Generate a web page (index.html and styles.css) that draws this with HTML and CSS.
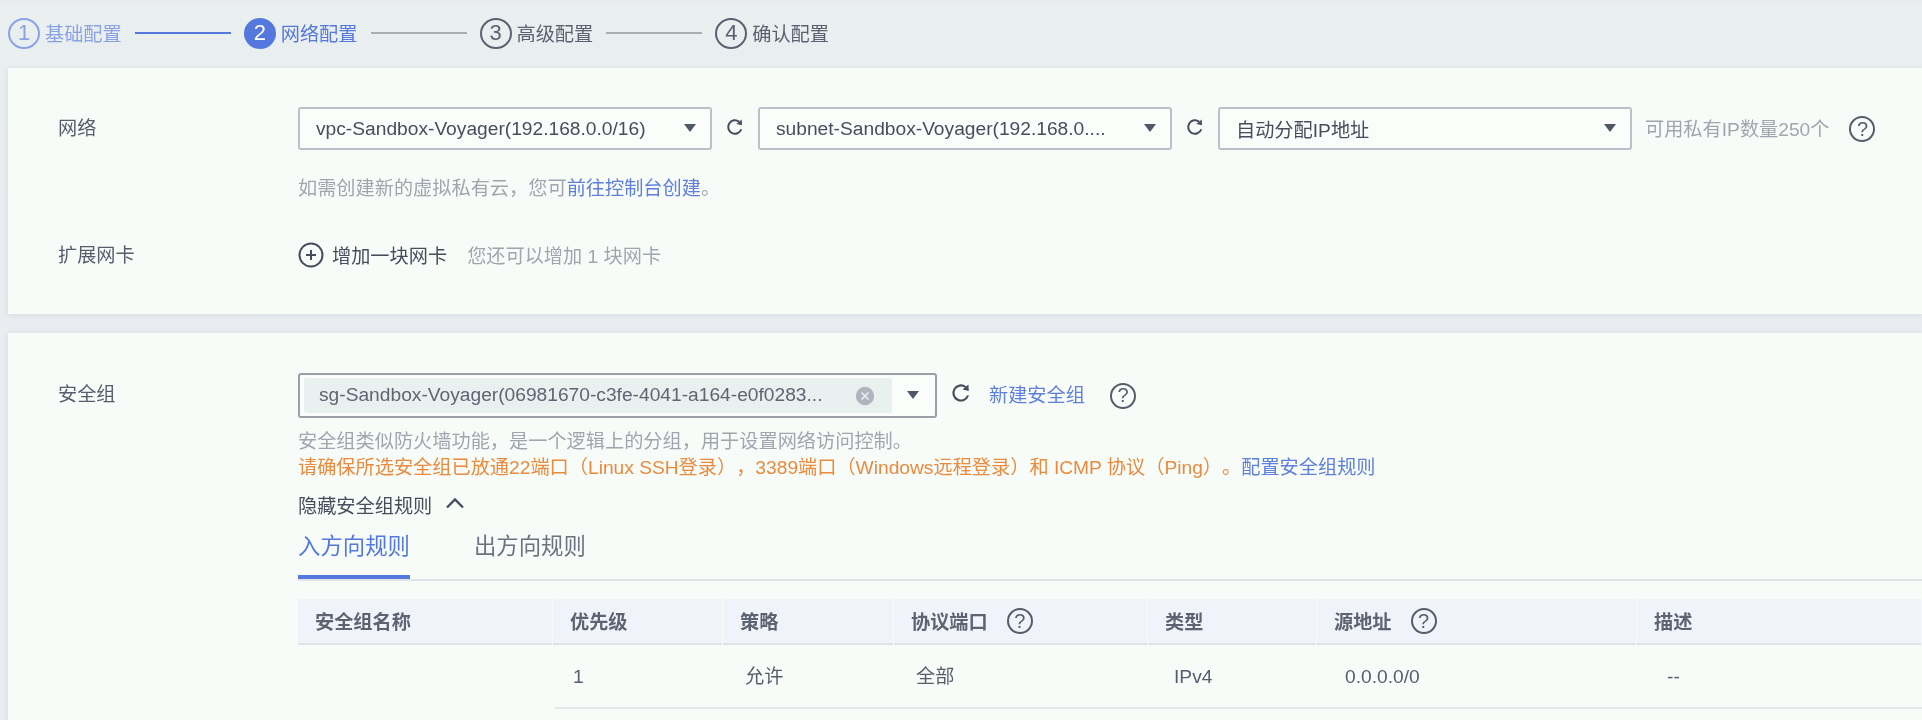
FILE: index.html
```html
<!DOCTYPE html>
<html lang="zh-CN">
<head>
    <meta charset="UTF-8">
    <title>网络配置</title>
    <link rel="stylesheet" href="styles.css">
</head>
<body>
    <div class="page">
        <!-- Wizard steps -->
        <div class="steps">
            <div class="step step-done"><span class="step-num">1</span><span class="step-text">基础配置</span></div>
            <div class="step-line step-line-done"></div>
            <div class="step step-active"><span class="step-num">2</span><span class="step-text">网络配置</span></div>
            <div class="step-line"></div>
            <div class="step"><span class="step-num">3</span><span class="step-text">高级配置</span></div>
            <div class="step-line"></div>
            <div class="step"><span class="step-num">4</span><span class="step-text">确认配置</span></div>
        </div>

        <div class="card card-network">
            <div class="form-row">
                <div class="form-label">网络</div>
                <div class="form-body">
                    <div class="controls">
                        <div class="select"><span class="select-text">vpc-Sandbox-Voyager(192.168.0.0/16)</span><span class="caret"></span></div>
                        <svg class="refresh" viewBox="0 0 20 20"><path d="M17 12.5A7.5 7.5 0 1 1 14.5 4"/><path class="fill" d="M17.4 1.6l.4 6.4-6.2-1.4z"/></svg>
                        <div class="select"><span class="select-text">subnet-Sandbox-Voyager(192.168.0....</span><span class="caret"></span></div>
                        <svg class="refresh" viewBox="0 0 20 20"><path d="M17 12.5A7.5 7.5 0 1 1 14.5 4"/><path class="fill" d="M17.4 1.6l.4 6.4-6.2-1.4z"/></svg>
                        <div class="select"><span class="select-text">自动分配IP地址</span><span class="caret"></span></div>
                        <span class="ip-count">可用私有IP数量250个</span>
                        <span class="help help-ip">?</span>
                    </div>
                    <div class="hint hint-vpc">如需创建新的虚拟私有云，您可<a class="link">前往控制台创建</a>。</div>
                </div>
            </div>
            <div class="form-row row-nic">
                <div class="form-label">扩展网卡</div>
                <div class="form-body nic">
                    <svg class="plus" viewBox="0 0 26 26"><circle cx="13" cy="13" r="11.5"/><path d="M13 8v10M8 13h10"/></svg>
                    <span class="nic-add">增加一块网卡</span>
                    <span class="nic-left">您还可以增加 1 块网卡</span>
                </div>
            </div>
        </div>

        <div class="card card-security">
            <div class="form-row">
                <div class="form-label">安全组</div>
                <div class="form-body">
                    <div class="controls">
                        <div class="select select-multi">
                            <div class="tag">
                                <span class="tag-text">sg-Sandbox-Voyager(06981670-c3fe-4041-a164-e0f0283...</span>
                                <svg class="tag-close" viewBox="0 0 20 20"><circle cx="10" cy="10" r="10"/><path d="M6.5 6.5l7 7M13.5 6.5l-7 7"/></svg>
                            </div>
                            <span class="caret"></span>
                        </div>
                        <svg class="refresh refresh-sg" viewBox="0 0 20 20"><path d="M17 12.5A7.5 7.5 0 1 1 14.5 4"/><path class="fill" d="M17.4 1.6l.4 6.4-6.2-1.4z"/></svg>
                        <a class="link new-sg">新建安全组</a>
                        <span class="help help-sg">?</span>
                    </div>
                    <div class="hint hint-sg">安全组类似防火墙功能，是一个逻辑上的分组，用于设置网络访问控制。</div>
                    <div class="warn">请确保所选安全组已放通22端口（Linux SSH登录），3389端口（Windows远程登录）和 ICMP 协议（Ping）。<a class="link">配置安全组规则</a></div>
                    <div class="toggle">隐藏安全组规则<svg class="chevron" viewBox="0 0 20 12"><path d="M2 10.5l8-8 8 8"/></svg></div>
                </div>
            </div>

            <div class="rules">
                <div class="tabs">
                    <div class="tab tab-active">入方向规则</div>
                    <div class="tab">出方向规则</div>
                </div>
                <div class="rule-table">
                    <div class="th">安全组名称</div>
                    <div class="th">优先级</div>
                    <div class="th">策略</div>
                    <div class="th">协议端口<span class="help help-th">?</span></div>
                    <div class="th">类型</div>
                    <div class="th">源地址<span class="help help-th">?</span></div>
                    <div class="th">描述</div>
                    <div class="td td-empty"></div>
                    <div class="td td-priority">1</div>
                    <div class="td td-policy">允许</div>
                    <div class="td td-policy">全部</div>
                    <div class="td td-type">IPv4</div>
                    <div class="td td-source">0.0.0.0/0</div>
                    <div class="td td-desc">--</div>
                </div>
            </div>
        </div>
    </div>
</body>
</html>
```

FILE: styles.css
```css
* {
    box-sizing: border-box;
}

body {
    margin: 0;
    height: 720px;
    overflow: hidden;
    background-color: #e9f0ef;
    font-family: "Liberation Sans", "Noto Sans CJK SC", sans-serif;
    font-size: 19.2px;
    text-spacing-trim: space-all;
    color: #474d5c;
}

/* The source capture is soft, so the whole page is softened a little */
.page {
    height: 720px;
    padding-left: 8px;
    background: linear-gradient(#e8e9ee, #e9f0ef 8px, #e9eef0 68px, #e9ecf2 100%);
    filter: blur(0.5px);
}

/* Wizard steps */
.steps {
    display: flex;
    align-items: center;
    height: 68px;
    padding-bottom: 2px;
}

.step {
    display: flex;
    align-items: center;
    gap: 5px;
    color: #5b6170;
}

.step-num {
    width: 32px;
    height: 31px;
    border: 2px solid #5b6170;
    border-radius: 50%;
    display: flex;
    justify-content: center;
    align-items: center;
    font-size: 22px;
}

.step-done {
    color: #8ba1e6;
}

.step-done .step-num {
    border-color: #8ba1e6;
}

.step-active {
    color: #5478de;
}

.step-active .step-num {
    border-color: #5478de;
    background-color: #5478de;
    color: #fff;
}

.step-line {
    width: 96px;
    height: 2px;
    margin: 0 13px;
    background-color: #a9aeb5;
}

.step-line-done {
    background-color: #5478de;
}

/* Cards */
.card {
    background-color: #f8fcf9;
    box-shadow: 0 1px 6px rgba(60, 70, 90, 0.1);
}

.card-network {
    height: 246px;
    padding-top: 39px;
}

.card-security {
    margin-top: 19px;
    height: 390px;
    padding-top: 40px;
}

.form-row {
    display: flex;
}

.form-label {
    width: 290px;
    flex-shrink: 0;
    padding-left: 50px;
    height: 44px;
    line-height: 44px;
    color: #575d6c;
}

.form-body {
    flex: 1;
    min-width: 0;
}

.controls {
    display: flex;
    align-items: center;
}

/* Selects */
.select {
    width: 414px;
    height: 43px;
    flex-shrink: 0;
    display: flex;
    align-items: center;
    justify-content: space-between;
    padding: 0 14px 0 16px;
    background-color: #fbfdfb;
    border: 2px solid #bcc0c8;
    border-radius: 3px;
    color: #474d5c;
}

.select-text {
    white-space: nowrap;
}

.caret {
    width: 0;
    height: 0;
    margin-top: -1px;
    border-left: 6px solid transparent;
    border-right: 6px solid transparent;
    border-top: 8px solid #4f5665;
}

.refresh {
    width: 18px;
    height: 18px;
    margin: -4px 14px 0;
    flex-shrink: 0;
    fill: none;
    stroke: #474d5c;
    stroke-width: 2.2;
}

.refresh .fill {
    fill: #474d5c;
    stroke: none;
}

.ip-count {
    margin-left: 13px;
    margin-top: -2px;
    white-space: nowrap;
    color: #a0a5ae;
}

.help {
    width: 26px;
    height: 26px;
    border: 2px solid #565c6a;
    border-radius: 50%;
    display: inline-flex;
    justify-content: center;
    align-items: center;
    flex-shrink: 0;
    font-size: 20px;
    font-weight: 400;
    color: #565c6a;
}

.help-ip {
    margin-left: 20px;
    margin-top: 1px;
}

.hint {
    color: #a0a5ae;
    white-space: nowrap;
}

.hint-vpc {
    margin-top: 24px;
    line-height: 30px;
}

.link {
    color: #5f7fdc;
}

/* Extra network card */
.row-nic {
    margin-top: 30px;
}

.nic {
    display: flex;
    align-items: center;
    height: 41px;
}

.plus {
    width: 26px;
    height: 26px;
    fill: none;
    stroke: #474d5c;
    stroke-width: 2;
}

.nic-add {
    margin-left: 8px;
    color: #474d5c;
}

.nic-left {
    margin-left: 20px;
    color: #a0a5ae;
}

/* Security group select */
.select-multi {
    width: 639px;
    height: 45px;
    padding: 0 16px 0 4px;
    border-color: #9a9fa8;
}

.tag {
    width: 588px;
    height: 35px;
    display: flex;
    align-items: center;
    justify-content: space-between;
    padding: 0 17px 2px 15px;
    background-color: #e9f0f0;
    border-radius: 3px;
    color: #5f6573;
}

.tag-text {
    white-space: nowrap;
}

.tag-close {
    width: 20px;
    height: 20px;
    margin-top: 2px;
    fill: #b0b5bd;
    stroke: #e9f0f0;
    stroke-width: 1.6;
}

.refresh-sg {
    width: 20px;
    height: 20px;
    margin: -6px 0 0 14px;
}

.new-sg {
    margin-left: 18px;
    margin-top: -3px;
    white-space: nowrap;
}

.help-sg {
    margin-left: 25px;
}

.hint-sg {
    margin-top: 11px;
    line-height: 26px;
}

.warn {
    line-height: 26px;
    white-space: nowrap;
    color: #ea8a3d;
}

.toggle {
    display: flex;
    align-items: center;
    margin-top: 11px;
    height: 26px;
    color: #474d5c;
}

.chevron {
    width: 20px;
    height: 12px;
    margin-left: 13px;
    margin-top: -4px;
    fill: none;
    stroke: #474d5c;
    stroke-width: 2.4;
}

/* Rules tabs and table */
.rules {
    margin-top: 4px;
    margin-left: 290px;
}

.tabs {
    display: flex;
    gap: 64px;
    height: 59px;
    border-bottom: 2px solid #dfe3e6;
}

.tab {
    height: 57px;
    line-height: 50px;
    font-size: 22.4px;
    color: #6d7280;
}

.tab-active {
    color: #5478de;
    border-bottom: 4px solid #5478de;
}

.rule-table {
    display: grid;
    grid-template-columns: 255px 170px 171px 254px 169px 320px 285px;
    margin-top: 18px;
}

.th {
    display: flex;
    align-items: center;
    height: 46px;
    padding-left: 17px;
    margin-right: 1px;
    background-color: #f0f3f9;
    border-bottom: 2px solid #dfe3e6;
    font-weight: 700;
    color: #5d6371;
}

.help-th {
    margin-left: 19px;
}

.td {
    height: 64px;
    line-height: 64px;
    padding-left: 22px;
    border-bottom: 2px solid #e3e7e8;
    color: #575d6c;
}

.td-empty {
    border-bottom: none;
}

.td-priority {
    margin-left: 2px;
    padding-left: 18px;
}

.td-type {
    padding-left: 26px;
}

.td-source {
    padding-left: 28px;
}

.td-desc {
    padding-left: 30px;
}
```
